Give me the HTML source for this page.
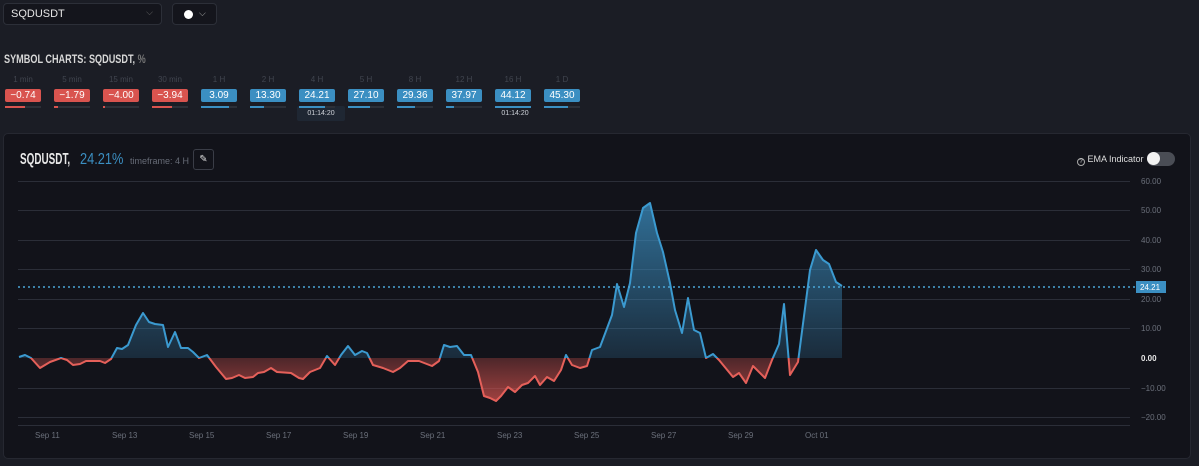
<!DOCTYPE html>
<html><head><meta charset="utf-8"><style>
*{box-sizing:border-box;margin:0;padding:0}
body{width:1199px;height:466px;background:#1b1d25;font-family:"Liberation Sans",sans-serif;color:#ddd;position:relative;overflow:hidden}
.sel{position:absolute;top:3px;height:22px;border:1px solid #2c2f38;background:#14151c;border-radius:4px;font-size:11px;color:#e6e6e6}
h1{position:absolute;left:4px;top:52px;font-size:12px;font-weight:bold;color:#d8d8d8;transform:scaleX(.76);transform-origin:left;white-space:nowrap}
.col{position:absolute;top:75px;width:36px;text-align:center}
.lab{font-size:8px;color:#41454f;height:14px}
.bd{height:13px;border-radius:2px;font-size:10px;color:#fff;line-height:13px}
.r{background:#d9544f}.b{background:#3b8fc2}
.bar{height:2px;background:#2c3038;margin-top:4px;position:relative}
.bar i{position:absolute;left:0;top:0;height:2px}
.tm{position:absolute;top:106px;width:48px;height:15px;font-size:7px;color:#cfd3da;text-align:center;line-height:15px;border-radius:2px}
.panel{position:absolute;left:3px;top:133px;width:1188px;height:326px;background:#12131a;border:1px solid #262831;border-radius:5px}
</style></head><body>
<div class="sel" style="left:3px;width:159px;padding:4px 7px">SQDUSDT<span style="position:absolute;right:8px;top:3px;color:#666;font-size:9px">⌵</span></div>
<div class="sel" style="left:172px;width:45px"><span style="position:absolute;left:11px;top:6px;width:9px;height:9px;border-radius:50%;background:#fff"></span><span style="position:absolute;left:26px;top:4px;color:#aaa;font-size:9px">⌵</span></div>
<h1>SYMBOL CHARTS: SQDUSDT, <span style="color:#777">%</span></h1>
<div class="col" style="left:5px"><div class="lab">1 min</div><div class="bd r">−0.74</div><div class="bar"><i style="width:20px;background:#d9544f"></i></div></div>
<div class="col" style="left:54px"><div class="lab">5 min</div><div class="bd r">−1.79</div><div class="bar"><i style="width:4px;background:#d9544f"></i></div></div>
<div class="col" style="left:103px"><div class="lab">15 min</div><div class="bd r">−4.00</div><div class="bar"><i style="width:2px;background:#d9544f"></i></div></div>
<div class="col" style="left:152px"><div class="lab">30 min</div><div class="bd r">−3.94</div><div class="bar"><i style="width:20px;background:#d9544f"></i></div></div>
<div class="col" style="left:201px"><div class="lab">1 H</div><div class="bd b">3.09</div><div class="bar"><i style="width:28px;background:#3b8fc2"></i></div></div>
<div class="col" style="left:250px"><div class="lab">2 H</div><div class="bd b">13.30</div><div class="bar"><i style="width:14px;background:#3b8fc2"></i></div></div>
<div class="tm" style="left:297px;background:#1f2733">01:14:20</div>
<div class="col" style="left:299px"><div class="lab">4 H</div><div class="bd b">24.21</div><div class="bar"><i style="width:26px;background:#3b8fc2"></i></div></div>
<div class="col" style="left:348px"><div class="lab">5 H</div><div class="bd b">27.10</div><div class="bar"><i style="width:22px;background:#3b8fc2"></i></div></div>
<div class="col" style="left:397px"><div class="lab">8 H</div><div class="bd b">29.36</div><div class="bar"><i style="width:18px;background:#3b8fc2"></i></div></div>
<div class="col" style="left:446px"><div class="lab">12 H</div><div class="bd b">37.97</div><div class="bar"><i style="width:8px;background:#3b8fc2"></i></div></div>
<div class="col" style="left:495px"><div class="lab">16 H</div><div class="bd b">44.12</div><div class="bar"><i style="width:36px;background:#3b8fc2"></i></div></div>
<div class="tm" style="left:491px">01:14:20</div>
<div class="col" style="left:544px"><div class="lab">1 D</div><div class="bd b">45.30</div><div class="bar"><i style="width:24px;background:#3b8fc2"></i></div></div>

<div class="panel"></div>
<div style="position:absolute;left:20px;top:151px;font-size:16px;font-weight:bold;color:#e8e8e8;transform:scaleX(.62);transform-origin:left;white-space:nowrap">SQDUSDT,</div>
<div style="position:absolute;left:80px;top:151px;font-size:16px;color:#3b8fc2;transform:scaleX(.8);transform-origin:left;white-space:nowrap">24.21%</div>
<div style="position:absolute;left:130px;top:156px;font-size:9px;color:#666b76">timeframe: 4 H</div>
<div style="position:absolute;left:193px;top:149px;width:21px;height:21px;border:1px solid #3a3d47;border-radius:3px;color:#ddd;font-size:10px;text-align:center;line-height:19px">✎</div>
<div style="position:absolute;left:1077px;top:154px;font-size:9px;color:#ddd"><span style="display:inline-block;width:8px;height:8px;border:1px solid #aaa;border-radius:50%;font-size:6px;line-height:7px;text-align:center;vertical-align:-1px">?</span> EMA Indicator</div>
<div style="position:absolute;left:1147px;top:152px;width:28px;height:14px;border-radius:7px;background:#4a4d55"><div style="width:13px;height:13px;border-radius:50%;background:#f2f2f2;margin:0"></div></div>

<svg style="position:absolute;left:0;top:0" width="1199" height="466">
<defs>
<linearGradient id="gb" x1="0" y1="200" x2="0" y2="358" gradientUnits="userSpaceOnUse"><stop offset="0" stop-color="#3b8fc2" stop-opacity=".75"/><stop offset="1" stop-color="#3b8fc2" stop-opacity=".2"/></linearGradient>
<linearGradient id="gr" x1="0" y1="358" x2="0" y2="405" gradientUnits="userSpaceOnUse"><stop offset="0" stop-color="#d9544f" stop-opacity=".3"/><stop offset="1" stop-color="#d9544f" stop-opacity=".75"/></linearGradient>
<clipPath id="up"><rect x="0" y="0" width="1199" height="358"/></clipPath>
<clipPath id="dn"><rect x="0" y="358" width="1199" height="100"/></clipPath>
</defs>
<g stroke="#2b2e38" stroke-width="1">
<line x1="18" x2="1130" y1="181.5" y2="181.5"/><line x1="18" x2="1130" y1="210.5" y2="210.5"/><line x1="18" x2="1130" y1="240.5" y2="240.5"/><line x1="18" x2="1130" y1="269.5" y2="269.5"/><line x1="18" x2="1130" y1="299.5" y2="299.5"/><line x1="18" x2="1130" y1="328.5" y2="328.5"/><line x1="18" x2="1130" y1="388.5" y2="388.5"/><line x1="18" x2="1130" y1="417.5" y2="417.5"/><line x1="18" x2="1130" y1="425.5" y2="425.5"/>
</g>
<g font-size="8" fill="#6b707b" font-family="Liberation Sans">
<text x="1141" y="184">60.00</text><text x="1141" y="213">50.00</text><text x="1141" y="243">40.00</text><text x="1141" y="272">30.00</text><text x="1141" y="302">20.00</text><text x="1141" y="331">10.00</text><text x="1141" y="361" fill="#e8e8e8" font-weight="bold">0.00</text><text x="1141" y="391">−10.00</text><text x="1141" y="420">−20.00</text>
<text x="35" y="438">Sep 11</text><text x="112" y="438">Sep 13</text><text x="189" y="438">Sep 15</text><text x="266" y="438">Sep 17</text><text x="343" y="438">Sep 19</text><text x="420" y="438">Sep 21</text><text x="497" y="438">Sep 23</text><text x="574" y="438">Sep 25</text><text x="651" y="438">Sep 27</text><text x="728" y="438">Sep 29</text><text x="805" y="438">Oct 01</text>
</g>
<polygon clip-path="url(#up)" fill="url(#gb)" points="19,358 19,357 25,355 31,358 40,368 50,362 61,358 67,360 73,365 80,364 86,361 100,361 105,363 111,359 117,348 122,349 128,345 136,325 143,313 149,322 155,324 163,325 168,347 175,332 181,348 188,348 193,352 199,358 207,355 216,367 226,379 232,378 239,375 245,378 253,377 258,373 264,372 271,368 277,372 291,373 299,378 303,379 310,372 320,368 327,356 335,365 341,355 348,346 355,355 362,351 367,353 373,365 383,368 393,372 400,368 408,361 419,361 432,366 439,361 444,345 450,347 457,346 464,355 471,355 478,372 484,396 490,398 496,401 501,396 508,387 515,392 522,385 528,383 535,376 540,385 547,377 554,381 561,370 566,355 572,365 580,368 587,366 592,350 600,347 612,315 617,284 624,307 630,283 636,233 643,208 650,203 657,233 663,252 670,283 675,310 682,333 688,298 694,330 700,333 706,358 713,354 719,360 733,377 739,373 746,383 753,366 765,378 772,360 779,344 784,304 790,375 798,362 810,270 816,250 823,260 829,264 836,282 842,286 842,358"/>
<polygon clip-path="url(#dn)" fill="url(#gr)" points="19,358 19,357 25,355 31,358 40,368 50,362 61,358 67,360 73,365 80,364 86,361 100,361 105,363 111,359 117,348 122,349 128,345 136,325 143,313 149,322 155,324 163,325 168,347 175,332 181,348 188,348 193,352 199,358 207,355 216,367 226,379 232,378 239,375 245,378 253,377 258,373 264,372 271,368 277,372 291,373 299,378 303,379 310,372 320,368 327,356 335,365 341,355 348,346 355,355 362,351 367,353 373,365 383,368 393,372 400,368 408,361 419,361 432,366 439,361 444,345 450,347 457,346 464,355 471,355 478,372 484,396 490,398 496,401 501,396 508,387 515,392 522,385 528,383 535,376 540,385 547,377 554,381 561,370 566,355 572,365 580,368 587,366 592,350 600,347 612,315 617,284 624,307 630,283 636,233 643,208 650,203 657,233 663,252 670,283 675,310 682,333 688,298 694,330 700,333 706,358 713,354 719,360 733,377 739,373 746,383 753,366 765,378 772,360 779,344 784,304 790,375 798,362 810,270 816,250 823,260 829,264 836,282 842,286 842,358"/>
<polyline fill="none" stroke-width="2" stroke-linejoin="round" stroke="#3b9ad0" clip-path="url(#up)" points="19,357 25,355 31,358 40,368 50,362 61,358 67,360 73,365 80,364 86,361 100,361 105,363 111,359 117,348 122,349 128,345 136,325 143,313 149,322 155,324 163,325 168,347 175,332 181,348 188,348 193,352 199,358 207,355 216,367 226,379 232,378 239,375 245,378 253,377 258,373 264,372 271,368 277,372 291,373 299,378 303,379 310,372 320,368 327,356 335,365 341,355 348,346 355,355 362,351 367,353 373,365 383,368 393,372 400,368 408,361 419,361 432,366 439,361 444,345 450,347 457,346 464,355 471,355 478,372 484,396 490,398 496,401 501,396 508,387 515,392 522,385 528,383 535,376 540,385 547,377 554,381 561,370 566,355 572,365 580,368 587,366 592,350 600,347 612,315 617,284 624,307 630,283 636,233 643,208 650,203 657,233 663,252 670,283 675,310 682,333 688,298 694,330 700,333 706,358 713,354 719,360 733,377 739,373 746,383 753,366 765,378 772,360 779,344 784,304 790,375 798,362 810,270 816,250 823,260 829,264 836,282 842,286"/>
<polyline fill="none" stroke-width="2" stroke-linejoin="round" stroke="#e5605a" clip-path="url(#dn)" points="19,357 25,355 31,358 40,368 50,362 61,358 67,360 73,365 80,364 86,361 100,361 105,363 111,359 117,348 122,349 128,345 136,325 143,313 149,322 155,324 163,325 168,347 175,332 181,348 188,348 193,352 199,358 207,355 216,367 226,379 232,378 239,375 245,378 253,377 258,373 264,372 271,368 277,372 291,373 299,378 303,379 310,372 320,368 327,356 335,365 341,355 348,346 355,355 362,351 367,353 373,365 383,368 393,372 400,368 408,361 419,361 432,366 439,361 444,345 450,347 457,346 464,355 471,355 478,372 484,396 490,398 496,401 501,396 508,387 515,392 522,385 528,383 535,376 540,385 547,377 554,381 561,370 566,355 572,365 580,368 587,366 592,350 600,347 612,315 617,284 624,307 630,283 636,233 643,208 650,203 657,233 663,252 670,283 675,310 682,333 688,298 694,330 700,333 706,358 713,354 719,360 733,377 739,373 746,383 753,366 765,378 772,360 779,344 784,304 790,375 798,362 810,270 816,250 823,260 829,264 836,282 842,286"/>
<line x1="18" x2="1136" y1="287" y2="287" stroke="#4aa6d8" stroke-width="1.5" stroke-dasharray="2,3"/>
<rect x="1136" y="281" width="30" height="12" fill="#3b8fc2"/>
<text x="1140" y="290" font-size="8" fill="#fff" font-family="Liberation Sans">24.21</text>
</svg>
</body></html>
